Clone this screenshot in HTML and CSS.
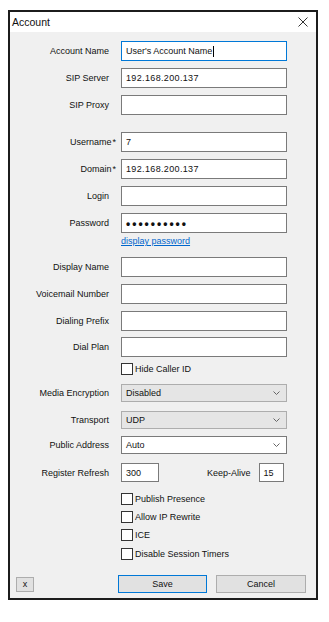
FILE: index.html
```html
<!DOCTYPE html>
<html>
<head>
<meta charset="utf-8">
<link rel="stylesheet" href="styles.css">
</head>
<body>
<div class="window">
  <div class="titlebar">
    <span class="title">Account</span>
    <svg class="close" width="10" height="10" viewBox="0 0 10 10"><path d="M0.5 0.5 L9.5 9.5 M9.5 0.5 L0.5 9.5" stroke="#333" stroke-width="1" fill="none"/></svg>
  </div>
  <div class="content">
    <div class="row r-first"><div class="lbl">Account Name</div><div class="field focus">User's Account Name<span class="caret"></span></div></div>
    <div class="row"><div class="lbl">SIP Server</div><div class="field ip">192.168.200.137</div></div>
    <div class="row"><div class="lbl">SIP Proxy</div><div class="field"></div></div>
    <div class="row r-g17"><div class="lbl">Username<span class="req">*</span></div><div class="field">7</div></div>
    <div class="row"><div class="lbl">Domain<span class="req">*</span></div><div class="field ip">192.168.200.137</div></div>
    <div class="row"><div class="lbl">Login</div><div class="field"></div></div>
    <div class="row"><div class="lbl">Password</div><div class="field pw">••••••••••</div></div>
    <div class="row r-link"><div class="lbl"></div><span class="link">display password</span></div>
    <div class="row r-g10"><div class="lbl">Display Name</div><div class="field"></div></div>
    <div class="row"><div class="lbl">Voicemail Number</div><div class="field"></div></div>
    <div class="row"><div class="lbl">Dialing Prefix</div><div class="field"></div></div>
    <div class="row r-g6"><div class="lbl">Dial Plan</div><div class="field"></div></div>
    <div class="row r-check r-g5"><div class="lbl"></div><span class="box"></span><span class="ctext">Hide Caller ID</span></div>
    <div class="row r-sel r-g9"><div class="lbl">Media Encryption</div><div class="select grey"><span>Disabled</span><svg width="7" height="4" viewBox="0 0 7 4"><path d="M0.5 0.5 L3.5 3.5 L6.5 0.5" stroke="#666" fill="none"/></svg></div></div>
    <div class="row r-sel r-g9"><div class="lbl">Transport</div><div class="select grey"><span>UDP</span><svg width="7" height="4" viewBox="0 0 7 4"><path d="M0.5 0.5 L3.5 3.5 L6.5 0.5" stroke="#666" fill="none"/></svg></div></div>
    <div class="row r-sel"><div class="lbl">Public Address</div><div class="select white"><span>Auto</span><svg width="7" height="4" viewBox="0 0 7 4"><path d="M0.5 0.5 L3.5 3.5 L6.5 0.5" stroke="#666" fill="none"/></svg></div></div>
    <div class="row r-reg r-g9"><div class="lbl">Register Refresh</div><div class="field small">300</div><div class="ka-lbl">Keep-Alive</div><div class="field tiny">15</div></div>
    <div class="row r-check r-g10"><div class="lbl"></div><span class="box"></span><span class="ctext">Publish Presence</span></div>
    <div class="row r-check r-g5"><div class="lbl"></div><span class="box"></span><span class="ctext">Allow IP Rewrite</span></div>
    <div class="row r-check r-g5"><div class="lbl"></div><span class="box"></span><span class="ctext">ICE</span></div>
    <div class="row r-check r-g6"><div class="lbl"></div><span class="box"></span><span class="ctext">Disable Session Timers</span></div>
    <div class="buttons">
      <div class="btn btn-x">x</div>
      <div class="btn btn-save">Save</div>
      <div class="btn btn-cancel">Cancel</div>
    </div>
  </div>
</div>
</body>
</html>
```
FILE: styles.css
```css
html, body {
  margin: 0;
  padding: 0;
  background: #ffffff;
}
body {
  font-family: "Liberation Sans", Arial, sans-serif;
  font-size: 9px;
  color: #111;
}
.window {
  margin: 10px 0 0 8px;
  width: 310px;
  height: 590px;
  box-sizing: border-box;
  border: 2px solid #1c1c1c;
  background: #f0f0f0;
  display: flex;
  flex-direction: column;
}
.titlebar {
  height: 20px;
  background: #ffffff;
  display: flex;
  align-items: center;
  justify-content: space-between;
  padding: 0 8px 0 2px;
  flex: none;
}
.title {
  font-size: 10.5px;
  color: #111;
  margin-top: -1px;
}
.close {
  display: block;
  margin-top: 0;
}
.content {
  display: flex;
  flex-direction: column;
  flex: 1;
}
.row {
  display: flex;
  align-items: center;
  height: 20px;
  margin-top: 7px;
  flex: none;
}
.r-first { margin-top: 9px; }
.r-g17 { margin-top: 17px; }
.r-g10 { margin-top: 10px; }
.r-g9 { margin-top: 9px; }
.r-g6 { margin-top: 6px; }
.r-g5 { margin-top: 5px; }
.r-link { height: 12px; margin-top: 2px; }
.r-check { height: 13px; }
.r-sel { height: 18px; }
.r-reg { height: 19px; }
.lbl {
  width: 99px;
  margin-right: 12px;
  flex: none;
  text-align: right;
  white-space: nowrap;
}
.req {
  margin-left: 1px;
  margin-right: -7px;
}
.field {
  width: 166px;
  height: 100%;
  box-sizing: border-box;
  border: 1px solid #7a7a7a;
  background: #ffffff;
  padding-left: 4px;
  display: flex;
  align-items: center;
  color: #111;
}
.field.focus {
  border-color: #0078d7;
}
.field.ip {
  letter-spacing: 0.35px;
}
.caret {
  display: inline-block;
  width: 1px;
  height: 11px;
  background: #000;
  margin-left: 1px;
}
.field.pw {
  font-size: 12px;
  font-weight: bold;
  letter-spacing: 2px;
  padding-top: 1px;
}
.link {
  color: #0066cc;
  text-decoration: underline;
}
.box {
  width: 12px;
  height: 12px;
  box-sizing: border-box;
  border: 1px solid #333;
  background: #fff;
  flex: none;
}
.ctext {
  margin-left: 2px;
}
.select {
  width: 166px;
  height: 100%;
  box-sizing: border-box;
  border: 1px solid #adadad;
  display: flex;
  align-items: center;
  justify-content: space-between;
  padding: 0 6px 0 4px;
}
.select.grey {
  background: #e5e5e5;
}
.select.white {
  background: #ffffff;
  border-color: #7a7a7a;
}
.select svg {
  display: block;
}
.field.small {
  width: 38px;
}
.ka-lbl {
  margin-left: 48px;
  margin-right: 8px;
}
.field.tiny {
  width: 25px;
}
.buttons {
  display: flex;
  align-items: center;
  margin-top: 15px;
  height: 18px;
}
.btn {
  box-sizing: border-box;
  border: 1px solid #adadad;
  background: #e1e1e1;
  display: flex;
  align-items: center;
  justify-content: center;
  color: #111;
}
.btn-x {
  width: 18px;
  height: 15px;
  margin-left: 6px;
}
.btn-save {
  width: 89px;
  height: 18px;
  margin-left: 84px;
  border-color: #0078d7;
}
.btn-cancel {
  width: 90px;
  height: 18px;
  margin-left: 9px;
}
```
